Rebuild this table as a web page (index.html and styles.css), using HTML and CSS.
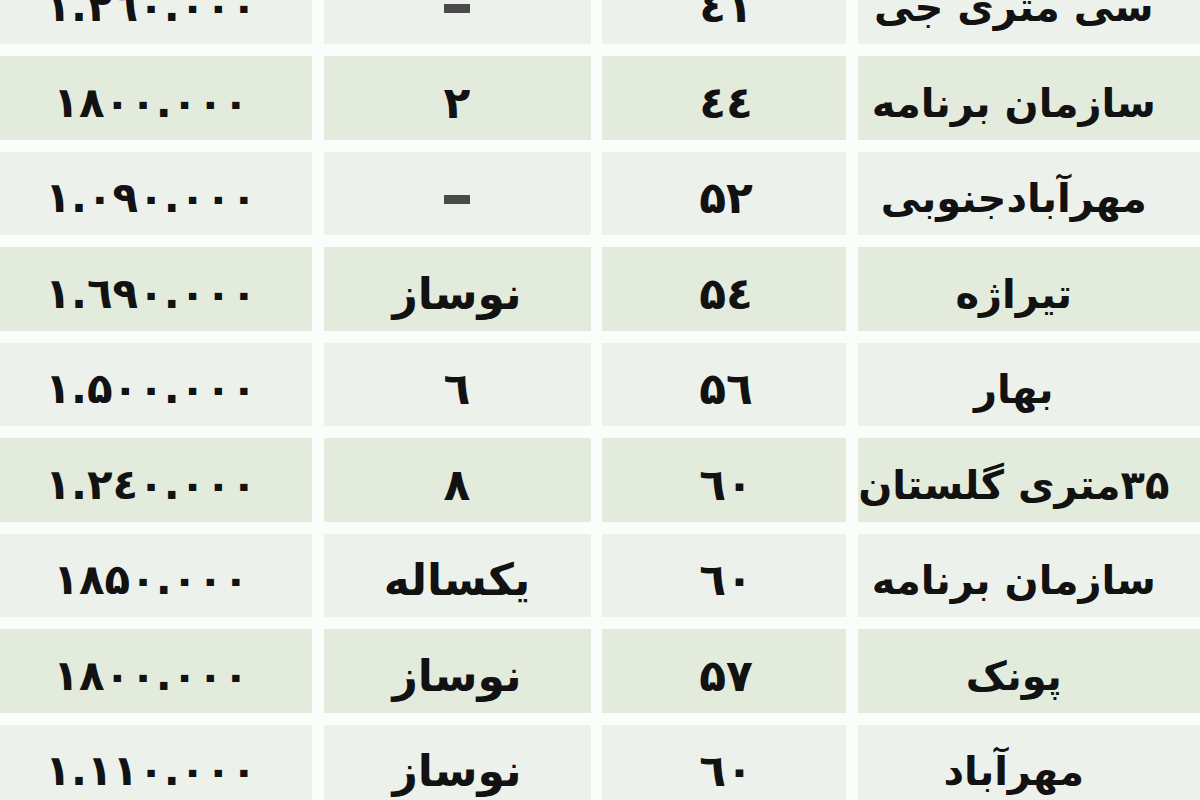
FILE: index.html
```html
<!DOCTYPE html>
<html lang="fa" dir="rtl">
<head>
<meta charset="utf-8">
<title>قیمت آپارتمان</title>
<link rel="stylesheet" href="styles.css">
</head>
<body>
<div class="table">
  <div class="cell c-loc light">سی متری جی</div>
  <div class="cell c-area light">٤۱</div>
  <div class="cell c-age light"><span class="dash"></span></div>
  <div class="cell c-price light">۱.۲٦۰.۰۰۰</div>

  <div class="cell c-loc green">سازمان برنامه</div>
  <div class="cell c-area green">٤٤</div>
  <div class="cell c-age green">۲</div>
  <div class="cell c-price green">۱۸۰۰.۰۰۰</div>

  <div class="cell c-loc light">مهرآبادجنوبی</div>
  <div class="cell c-area light">۵۲</div>
  <div class="cell c-age light"><span class="dash"></span></div>
  <div class="cell c-price light">۱.۰۹۰.۰۰۰</div>

  <div class="cell c-loc green">تیراژه</div>
  <div class="cell c-area green">۵٤</div>
  <div class="cell c-age green">نوساز</div>
  <div class="cell c-price green">۱.٦۹۰.۰۰۰</div>

  <div class="cell c-loc light">بهار</div>
  <div class="cell c-area light">۵٦</div>
  <div class="cell c-age light">٦</div>
  <div class="cell c-price light">۱.۵۰۰.۰۰۰</div>

  <div class="cell c-loc green">۳۵متری گلستان</div>
  <div class="cell c-area green">٦۰</div>
  <div class="cell c-age green">۸</div>
  <div class="cell c-price green">۱.۲٤۰.۰۰۰</div>

  <div class="cell c-loc light">سازمان برنامه</div>
  <div class="cell c-area light">٦۰</div>
  <div class="cell c-age light">یکساله</div>
  <div class="cell c-price light">۱۸۵۰.۰۰۰</div>

  <div class="cell c-loc green">پونک</div>
  <div class="cell c-area green">۵۷</div>
  <div class="cell c-age green">نوساز</div>
  <div class="cell c-price green">۱۸۰۰.۰۰۰</div>

  <div class="cell c-loc light">مهرآباد</div>
  <div class="cell c-area light">٦۰</div>
  <div class="cell c-age light">نوساز</div>
  <div class="cell c-price light">۱.۱۱۰.۰۰۰</div>
</div>
</body>
</html>
```
FILE: styles.css
```css
html, body {
  margin: 0;
  padding: 0;
  background: #fbfdfa;
  overflow: hidden;
  width: 1200px;
  height: 800px;
}

.table {
  direction: rtl;
  display: grid;
  grid-template-columns: 1fr 244px 267px 312px;
  grid-auto-rows: 83.5px;
  column-gap: 11.5px;
  row-gap: 12px;
  margin-top: -39.5px;
  font-family: "DejaVu Sans", sans-serif;
  font-weight: bold;
  color: #121212;
}

.cell {
  display: flex;
  align-items: center;
  justify-content: center;
  padding-top: 10px;
  box-sizing: border-box;
  font-size: 40px;
  line-height: 1;
  white-space: nowrap;
}

.light { background: #edf1eb; }
.green { background: #e3ebdd; }

.c-loc { padding-right: 30px; }

.c-age { font-size: 44px; }

.c-area {
  font-size: 44px;
  letter-spacing: 4px;
  padding-left: 4px;
}

.c-price {
  direction: ltr;
  font-size: 42px;
  letter-spacing: 3px;
  padding-right: 10px;
}

.dash {
  display: block;
  width: 26px;
  height: 9px;
  background: #4a4a4a;
  margin-top: 2px;
}
```
